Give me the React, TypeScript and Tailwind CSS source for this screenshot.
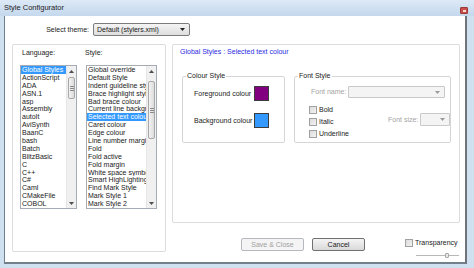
import React from 'react';

const languages = [
  'Global Styles', 'ActionScript', 'ADA', 'ASN.1', 'asp', 'Assembly', 'autoIt', 'AviSynth', 'BaanC',
  'bash', 'Batch', 'BlitzBasic', 'C', 'C++', 'C#', 'Caml', 'CMakeFile', 'COBOL',
];

const styles = [
  'Global override', 'Default Style', 'Indent guideline style', 'Brace highlight style', 'Bad brace colour',
  'Current line background colour', 'Selected text colour', 'Caret colour', 'Edge colour', 'Line number margin',
  'Fold', 'Fold active', 'Fold margin', 'White space symbol', 'Smart HighLighting', 'Find Mark Style',
  'Mark Style 1', 'Mark Style 2',
];

function Arrow({ up = false, color = '#4d4d4d' }: { up?: boolean; color?: string }) {
  return (
    <svg width="5" height="3" viewBox="0 0 5 3">
      <path d={up ? 'M0 3 L2.5 0 L5 3 Z' : 'M0 0 L5 0 L2.5 3 Z'} fill={color} />
    </svg>
  );
}

function ListBox({ items, selected, width, thumbTop, thumbHeight }: {
  items: string[]; selected: number; width: string; thumbTop: number; thumbHeight: number;
}) {
  return (
    <div className={`${width} h-[144px] border border-[#a5acb5] bg-white flex`}>
      <div className="flex-1 min-w-0 flex flex-col overflow-hidden">
        {items.map((it, i) => (
          <div
            key={it}
            className={`h-[8px] leading-[8px] pl-[1px] whitespace-nowrap overflow-hidden ${i === selected ? 'bg-[#3399ff] text-white' : 'text-[#1a1a1a]'}`}
          >
            {it}
          </div>
        ))}
      </div>
      <div className="w-[10px] bg-[#f0f0f0] border-l border-[#e6e6e6] flex flex-col">
        <div className="h-[10px] flex items-center justify-center"><Arrow up /></div>
        <div className="flex-1 relative">
          <div
            className="absolute left-[1px] right-[1px] rounded-[2px] border border-[#a8a8a8] bg-gradient-to-r from-[#f3f3f3] to-[#dcdcdc] flex items-center justify-center"
            style={{ top: thumbTop, height: thumbHeight }}
          >
            <div className="flex flex-col gap-[1px]">
              <div className="w-[4px] h-px bg-[#8a8a8a]" />
              <div className="w-[4px] h-px bg-[#8a8a8a]" />
              <div className="w-[4px] h-px bg-[#8a8a8a]" />
            </div>
          </div>
        </div>
        <div className="h-[10px] flex items-center justify-center"><Arrow /></div>
      </div>
    </div>
  );
}

function CheckBox({ label, disabled = false }: { label: string; disabled?: boolean }) {
  return (
    <div className="flex items-center h-[12px]">
      <div className="w-[8px] h-[8px] border border-[#a0a0a0] bg-gradient-to-br from-[#dcdcdc] to-[#f2f2f2]" />
      <span className={`ml-[2px] ${disabled ? 'text-[#a0a0a0]' : 'text-[#1a1a1a]'}`}>{label}</span>
    </div>
  );
}

export default function App() {
  return (
    <div
      className="w-[474px] h-[268px] overflow-hidden bg-[#cfe0f1] flex flex-col text-[7px] leading-[8px]"
      style={{ fontFamily: '"Liberation Sans", Arial, sans-serif' }}
    >
      {/* title bar */}
      <div className="h-[16px] shrink-0 bg-gradient-to-b from-[#dde9f6] to-[#c4d8ed] flex items-center pl-[4px] pr-[6px]">
        <span className="text-[7.5px] text-[#1b1b1b]">Style Configurator</span>
        <div className="ml-auto mt-[5px] w-[8px] h-[7px] rounded-[1px] bg-[#c9504a] border border-[#9b3a36] flex items-center justify-center">
          <div className="w-[3px] h-[2px] bg-[#f4d8d0]" />
        </div>
      </div>

      {/* window body */}
      <div className="flex h-[248px] shrink-0">
        <div className="w-[4px] bg-[#cfe0f1]" />
        <div className="w-[463px] flex flex-col border-l border-[#71808f] border-r-2 border-r-[#6f7377] border-b-2 border-b-[#737f8b]">
          <div className="h-[246px] bg-white flex flex-col">
            {/* theme row */}
            <div className="flex items-center pt-[7px] h-[20px] shrink-0">
              <span className="ml-[40px] w-[44px] text-right text-[#1a1a1a]">Select theme:</span>
              <div className="ml-[4px] w-[97px] h-[13px] border border-[#7c7c7c] rounded-[2px] bg-gradient-to-b from-[#f4f4f4] to-[#dedede] flex items-center pl-[3px] pr-[4px]">
                <span className="text-[#1a1a1a]">Default (stylers.xml)</span>
                <span className="ml-auto"><Arrow color="#202020" /></span>
              </div>
            </div>

            <div className="flex mt-[8px]">
              {/* left group */}
              <div className="ml-[7px] w-[154px] h-[208px] border border-[#dcdcdc] rounded-[2px] pl-[7px] pt-[4px]">
                <div className="flex">
                  <span className="ml-[2px] w-[63px] text-[#1a1a1a]">Language:</span>
                  <span className="text-[#1a1a1a]">Style:</span>
                </div>
                <div className="flex mt-[8px]">
                  <ListBox items={languages} selected={0} width="w-[57px]" thumbTop={1} thumbHeight={22} />
                  <div className="w-[9px]" />
                  <ListBox items={styles} selected={6} width="w-[71px]" thumbTop={5} thumbHeight={58} />
                </div>
              </div>

              {/* right column */}
              <div className="ml-[6px] w-[288px] flex flex-col">
                <div className="h-[179px] border border-[#dcdcdc] rounded-[2px] pt-[3px] pl-[7px]">
                  <div className="text-[#2a2ae0]">Global Styles : Selected text colour</div>
                  <div className="flex mt-[16px] ml-[2px]">
                    <fieldset className="w-[103px] h-[71px] border border-[#d5d5d5] rounded-[2px] pl-[11px]">
                      <legend className="-ml-[8px] px-[1px] text-[#1a1a1a]">Colour Style</legend>
                      <div className="flex items-center mt-[6px]">
                        <span className="w-[60px] shrink-0 whitespace-nowrap text-[#1a1a1a]">Foreground colour</span>
                        <div className="w-[15px] h-[15px] shrink-0 border border-[#3c3c3c] bg-[#800080]" />
                      </div>
                      <div className="flex items-center mt-[12px]">
                        <span className="w-[60px] shrink-0 whitespace-nowrap text-[#1a1a1a]">Background colour</span>
                        <div className="w-[15px] h-[15px] shrink-0 border border-[#3c3c3c] bg-[#3399ff]" />
                      </div>
                    </fieldset>
                    <fieldset className="ml-[9px] w-[156px] h-[71px] border border-[#d5d5d5] rounded-[2px] pl-[14px]">
                      <legend className="-ml-[11px] px-[1px] text-[#1a1a1a]">Font Style</legend>
                      <div className="flex items-center mt-[6px] h-[12px]">
                        <span className="ml-[2px] w-[37px] text-[#a3a3a3]">Font name:</span>
                        <div className="w-[97px] h-[12px] border border-[#c9c9c9] rounded-[1px] bg-[#f4f4f4] flex items-center justify-end pr-[4px]">
                          <Arrow color="#9a9a9a" />
                        </div>
                      </div>
                      <div className="flex mt-[6px]">
                        <div className="flex flex-col">
                          <CheckBox label="Bold" />
                          <CheckBox label="Italic" />
                          <CheckBox label="Underline" />
                        </div>
                        <div className="ml-[39px] mt-[9px] flex items-center h-[13px]">
                          <span className="w-[32px] text-[#a3a3a3]">Font size:</span>
                          <div className="w-[30px] h-[13px] border border-[#c9c9c9] rounded-[1px] bg-[#f4f4f4] flex items-center justify-end pr-[4px]">
                            <Arrow color="#9a9a9a" />
                          </div>
                        </div>
                      </div>
                    </fieldset>
                  </div>
                </div>

                {/* buttons */}
                <div className="flex mt-[15px] items-start">
                  <div className="ml-[69px] w-[63px] h-[13px] border border-[#b5b9bd] rounded-[2px] bg-[#f4f4f4] flex items-center justify-center text-[#a0a0a0]">
                    Save &amp; Close
                  </div>
                  <div className="ml-[8px] w-[53px] h-[13px] border border-[#707070] rounded-[2px] bg-gradient-to-b from-[#f4f4f4] to-[#d9d9d9] flex items-center justify-center text-[#1a1a1a]">
                    Cancel
                  </div>
                  <div className="ml-[40px] -mt-[1px] flex flex-col">
                    <CheckBox label="Transparency" />
                    <div className="relative mt-[4px] ml-[11px] w-[43px] h-[5px] flex items-center">
                      <div className="w-full h-px bg-[#b8b8b8]" />
                      <div className="absolute left-[29px] top-0 w-[4px] h-[5px] rounded-[1px] border border-[#a8a8a8] bg-[#e8e8e8]" />
                    </div>
                  </div>
                </div>
              </div>
            </div>
          </div>
        </div>
        <div className="flex-1 bg-[#cfe0f1]" />
      </div>
    </div>
  );
}
